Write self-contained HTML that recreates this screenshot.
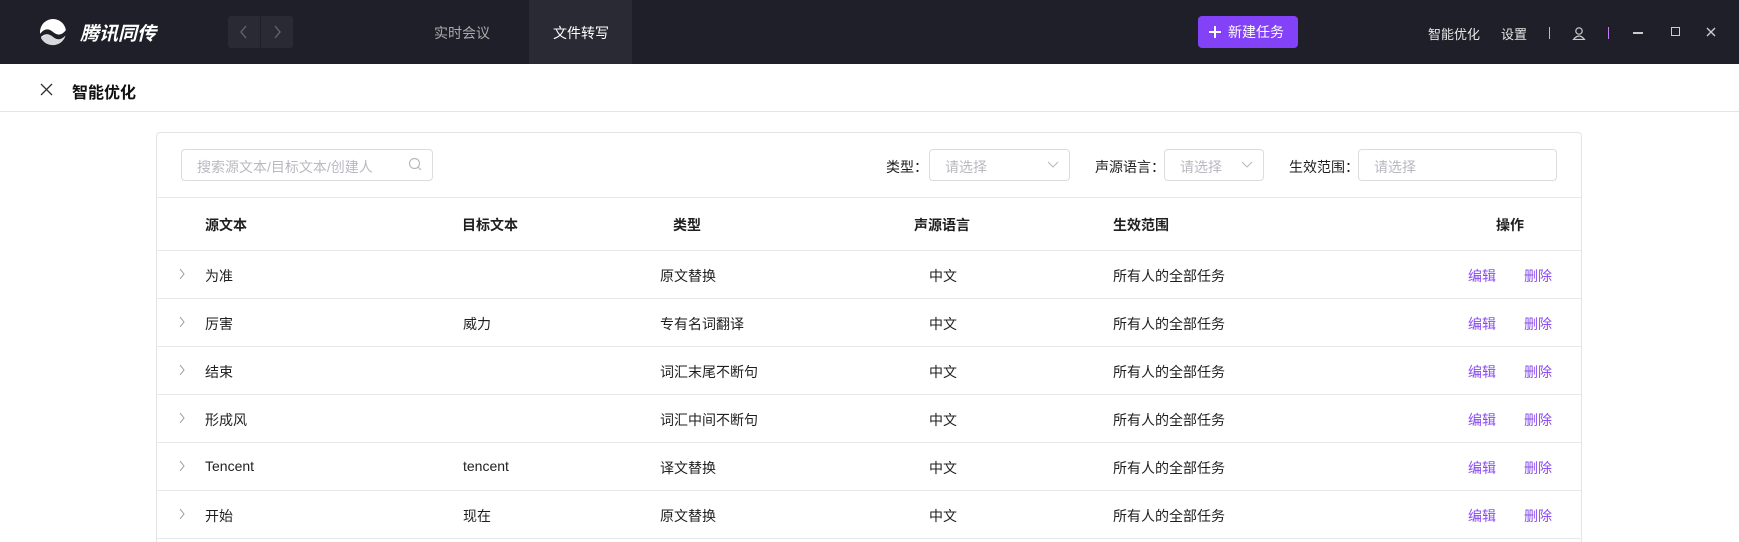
<!DOCTYPE html>
<html><head><meta charset="utf-8"><style>
*{margin:0;padding:0;box-sizing:border-box}
html,body{width:1739px;height:542px;overflow:hidden}
body{background:#fff;font-family:"Liberation Sans","Noto Sans CJK SC",sans-serif;font-size:14px;color:#1f1f1f;position:relative}
.a{position:absolute;white-space:nowrap}
.hdr{position:absolute;left:0;top:0;width:1739px;height:64px;background:#1f1f29}
.w{color:#e6e6e6}
.line{position:absolute;left:156px;width:1426px;height:1px;background:#e8e8ec}
.sel{position:absolute;border:1px solid #dcdce0;border-radius:4px;height:32px;top:149px}
.ph{color:#b8b8c0}
.op{color:#8a4cf0}
</style></head><body>
<div class="hdr">
 <svg class="a" style="left:39px;top:18px" width="28" height="28" viewBox="0 0 28 28"><circle cx="14" cy="14" r="13" fill="#fff"/><path d="M1 16 Q7 8 14 14 Q21 20 27 12 L27 17 Q21 25 14 19 Q7 13 1 20Z" fill="#1f1f29"/><path d="M2 20 Q8 14 14 19 Q20 24 26 18 A13 13 0 0 1 2 20Z" fill="#d8d8dc"/></svg>
 <div class="a" style="left:80px;top:19px;font-size:19px;font-weight:bold;font-style:italic;color:#fff">腾讯同传</div>
 <div class="a" style="left:228px;top:16px;width:65px;height:32px;background:#2a2a35;border-radius:3px"></div>
 <div class="a" style="left:260px;top:16px;width:1px;height:32px;background:#1f1f29"></div>
 <svg class="a" style="left:239px;top:25px" width="10" height="14"><path d="M7 1 L2 7 L7 13" stroke="#666" fill="none" stroke-width="1.3"/></svg>
 <svg class="a" style="left:272px;top:25px" width="10" height="14"><path d="M3 1 L8 7 L3 13" stroke="#666" fill="none" stroke-width="1.3"/></svg>
 <div class="a" style="left:434px;top:23px;color:#aaa;font-size:14px">实时会议</div>
 <div class="a" style="left:529px;top:0;width:103px;height:64px;background:#2a2a35"></div>
 <div class="a" style="left:553px;top:23px;color:#fff;font-size:14px">文件转写</div>
 <div class="a" style="left:1198px;top:16px;width:100px;height:32px;background:#8341f8;border-radius:4px;color:#fff;font-size:14px;line-height:32px;padding-left:30px">新建任务</div>
 <svg class="a" style="left:1208px;top:25px" width="14" height="14"><path d="M7 1V13M1 7H13" stroke="#fff" stroke-width="2"/></svg>
 <div class="a w" style="left:1428px;top:24px;font-size:13px">智能优化</div>
 <div class="a w" style="left:1501px;top:24px;font-size:13px">设置</div>
 <div class="a" style="left:1549px;top:27px;width:1px;height:12px;background:#bbb"></div>
 <svg class="a" style="left:1572px;top:26px" width="14" height="14"><circle cx="7" cy="5" r="3.2" stroke="#ccc" fill="none" stroke-width="1.2"/><path d="M1.5 13.5 Q7 6.5 12.5 13.5Z" stroke="#ccc" fill="none" stroke-width="1.2"/></svg>
 <div class="a" style="left:1608px;top:27px;width:1px;height:12px;background:#c77df0"></div>
 <div class="a" style="left:1633px;top:32px;width:10px;height:1.5px;background:#ccc"></div>
 <div class="a" style="left:1671px;top:27px;width:9px;height:9px;border:1.5px solid #ccc"></div>
 <svg class="a" style="left:1706px;top:27px" width="10" height="10"><path d="M1 1L9 9M9 1L1 9" stroke="#ccc" stroke-width="1.4"/></svg>
</div>
<svg class="a" style="left:40px;top:83px" width="13" height="13"><path d="M1 1L12 12M12 1L1 12" stroke="#333" stroke-width="1.3"/></svg>
<div class="a" style="left:72px;top:79px;font-size:16px;font-weight:bold;color:#111">智能优化</div>
<div class="a" style="left:0;top:111px;width:1739px;height:1px;background:#e4e4e8"></div>

<div class="a" style="left:156px;top:132px;width:1426px;height:410px;border:1px solid #e4e4e8;border-bottom:none;border-radius:4px 4px 0 0"></div>
<div class="sel" style="left:181px;width:252px"></div>
<div class="a ph" style="left:197px;top:157px;font-size:14px">搜索源文本/目标文本/创建人</div>
<svg class="a" style="left:408px;top:157px" width="15" height="15"><circle cx="6.5" cy="6.5" r="5" stroke="#bbb" fill="none" stroke-width="1.2"/><path d="M10 10L13 13" stroke="#bbb" stroke-width="1.2"/></svg>
<div class="a" style="left:886px;top:157px">类型：</div>
<div class="sel" style="left:929px;width:141px"></div>
<div class="a ph" style="left:945px;top:157px">请选择</div>
<svg class="a" style="left:1047px;top:161px" width="12" height="8"><path d="M1 1L6 6L11 1" stroke="#bbb" fill="none" stroke-width="1.1"/></svg>
<div class="a" style="left:1095px;top:157px">声源语言：</div>
<div class="sel" style="left:1164px;width:100px"></div>
<div class="a ph" style="left:1180px;top:157px">请选择</div>
<svg class="a" style="left:1241px;top:161px" width="12" height="8"><path d="M1 1L6 6L11 1" stroke="#bbb" fill="none" stroke-width="1.1"/></svg>
<div class="a" style="left:1289px;top:157px">生效范围：</div>
<div class="sel" style="left:1358px;width:199px"></div>
<div class="a ph" style="left:1374px;top:157px">请选择</div>

<div class="line" style="top:197px"></div>
<div class="a" style="left:205px;top:215px;font-weight:bold">源文本</div>
<div class="a" style="left:462px;top:215px;font-weight:bold">目标文本</div>
<div class="a" style="left:673px;top:215px;font-weight:bold">类型</div>
<div class="a" style="left:914px;top:215px;font-weight:bold">声源语言</div>
<div class="a" style="left:1113px;top:215px;font-weight:bold">生效范围</div>
<div class="a" style="left:1496px;top:215px;font-weight:bold">操作</div>
<div class="line" style="top:250px"></div>

<div id="rows"></div>
<script>
var d=[["为准","","原文替换"],["厉害","威力","专有名词翻译"],["结束","","词汇末尾不断句"],["形成风","","词汇中间不断句"],["Tencent","tencent","译文替换"],["开始","现在","原文替换"]];
var h="";
d.forEach(function(r,i){var t=250+i*48;var y=t+16;
h+='<svg class="a" style="left:178px;top:'+(y+2)+'px" width="8" height="12"><path d="M2 1L6 6L2 11" stroke="#999" fill="none" stroke-width="1"/></svg>';
h+='<div class="a" style="left:205px;top:'+y+'px">'+r[0]+'</div>';
h+='<div class="a" style="left:463px;top:'+y+'px">'+r[1]+'</div>';
h+='<div class="a" style="left:660px;top:'+y+'px">'+r[2]+'</div>';
h+='<div class="a" style="left:929px;top:'+y+'px">中文</div>';
h+='<div class="a" style="left:1113px;top:'+y+'px">所有人的全部任务</div>';
h+='<div class="a op" style="left:1468px;top:'+y+'px">编辑</div>';
h+='<div class="a op" style="left:1524px;top:'+y+'px">删除</div>';
h+='<div class="line" style="top:'+(t+48)+'px"></div>';});
document.getElementById("rows").innerHTML=h;
</script>
</body></html>
